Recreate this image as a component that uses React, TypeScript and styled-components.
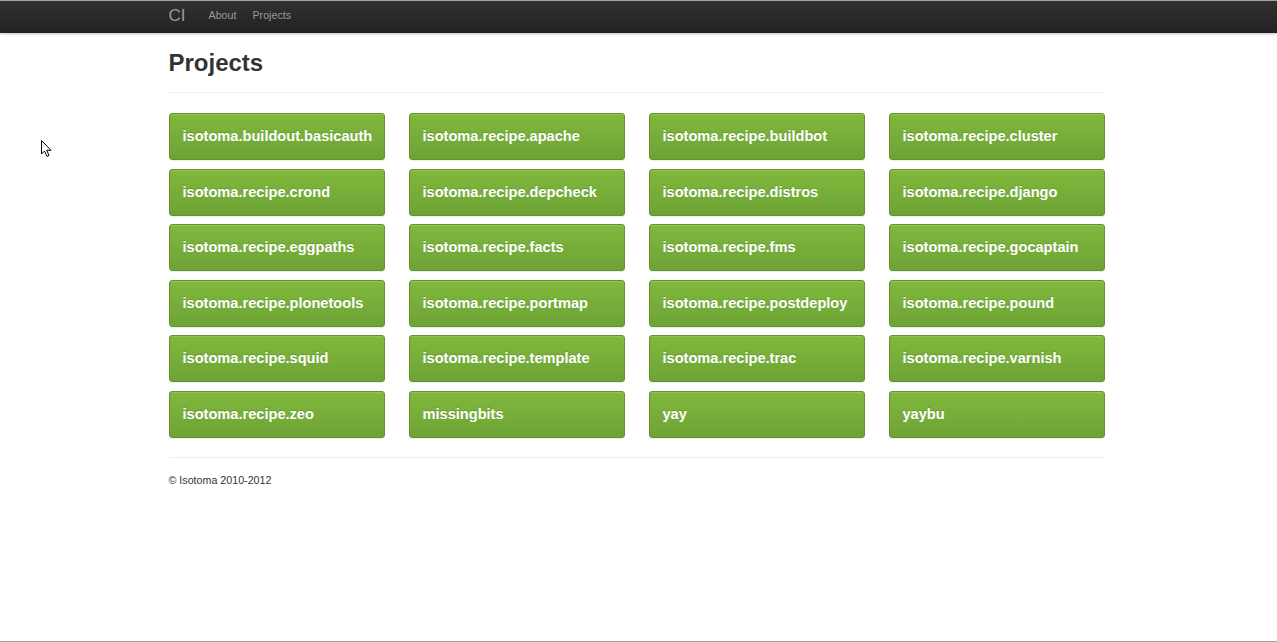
import React from "react";
import styled, { createGlobalStyle } from "styled-components";

const GlobalStyle = createGlobalStyle`
  html, body { margin: 0; padding: 0; background: #fff; }
  body { font-family: "Liberation Sans", Arial, sans-serif; color: #333; }
  * { box-sizing: border-box; }
`;

const Page = styled.div`
  position: relative;
  min-height: 100vh;
  border-bottom: 1px solid #aaa49e;
  display: flex;
  flex-direction: column;
`;

const Navbar = styled.div`
  height: 33px;
  border-top: 1px solid #a8a29c;
  background: linear-gradient(to bottom, #313131, #222222);
  box-shadow: 0 1px 3px rgba(0, 0, 0, 0.25);
`;

const Container = styled.div`
  width: 940px;
  margin: 0 auto;
`;

const NavInner = styled(Container)`
  display: flex;
  align-items: center;
  height: 100%;
  padding-bottom: 3px;
`;

const Brand = styled.a`
  font-size: 17px;
  color: #999;
  text-decoration: none;
  margin-right: 23px;
  line-height: 1;
`;

const NavLink = styled.a`
  font-size: 10.7px;
  color: #999;
  text-decoration: none;
  margin-right: 16px;
  margin-top: -2px;
`;

const Content = styled(Container)`
  padding-top: 15px;
`;

const PageHeader = styled.div`
  width: 936px;
  border-bottom: 1px solid #eee;
  padding-bottom: 14px;
  margin-bottom: 20px;
`;

const Title = styled.h1`
  margin: 0;
  font-size: 24px;
  line-height: 30px;
  font-weight: bold;
  color: #333;
`;

const Grid = styled.div`
  display: grid;
  grid-template-columns: repeat(4, 216px);
  column-gap: 24px;
  row-gap: 8.5px;
`;

const ProjectButton = styled.a`
  display: flex;
  align-items: center;
  height: 47px;
  padding: 0 12px 1px 13px;
  border: 1px solid #62932f;
  border-radius: 3px;
  background: linear-gradient(to bottom, #80b93d, #6ea335);
  color: #fff;
  font-weight: bold;
  font-size: 14.6px;
  text-decoration: none;
  text-shadow: 0 -1px 0 rgba(0, 0, 0, 0.15);
  box-shadow: inset 0 1px 0 rgba(255, 255, 255, 0.15), 0 1px 1px rgba(0, 0, 0, 0.08);
  white-space: nowrap;
`;

const Footer = styled.footer`
  width: 936px;
  margin-top: 19px;
  border-top: 1px solid #eee;
  padding-top: 16px;
  font-size: 10.7px;
  color: #333;
`;

const Cursor = styled.svg`
  position: absolute;
  left: 40px;
  top: 139px;
  width: 14px;
  height: 21px;
`;

const projects = [
  "isotoma.buildout.basicauth",
  "isotoma.recipe.apache",
  "isotoma.recipe.buildbot",
  "isotoma.recipe.cluster",
  "isotoma.recipe.crond",
  "isotoma.recipe.depcheck",
  "isotoma.recipe.distros",
  "isotoma.recipe.django",
  "isotoma.recipe.eggpaths",
  "isotoma.recipe.facts",
  "isotoma.recipe.fms",
  "isotoma.recipe.gocaptain",
  "isotoma.recipe.plonetools",
  "isotoma.recipe.portmap",
  "isotoma.recipe.postdeploy",
  "isotoma.recipe.pound",
  "isotoma.recipe.squid",
  "isotoma.recipe.template",
  "isotoma.recipe.trac",
  "isotoma.recipe.varnish",
  "isotoma.recipe.zeo",
  "missingbits",
  "yay",
  "yaybu",
];

export default function App() {
  return (
    <Page>
      <GlobalStyle />
      <Navbar>
        <NavInner>
          <Brand href="#">CI</Brand>
          <NavLink href="#">About</NavLink>
          <NavLink href="#">Projects</NavLink>
        </NavInner>
      </Navbar>
      <Content>
        <PageHeader>
          <Title>Projects</Title>
        </PageHeader>
        <Grid>
          {projects.map((p) => (
            <ProjectButton key={p} href="#">
              {p}
            </ProjectButton>
          ))}
        </Grid>
        <Footer>© Isotoma 2010-2012</Footer>
      </Content>
      <Cursor viewBox="0 0 14 21">
        <path
          d="M1.5 1.5 L1.5 15 L4.5 12 L7 17.5 L9 16.5 L6.8 11.3 L11 11.3 Z"
          fill="#fff"
          stroke="#000"
          strokeWidth="1"
          strokeLinejoin="round"
        />
      </Cursor>
    </Page>
  );
}
